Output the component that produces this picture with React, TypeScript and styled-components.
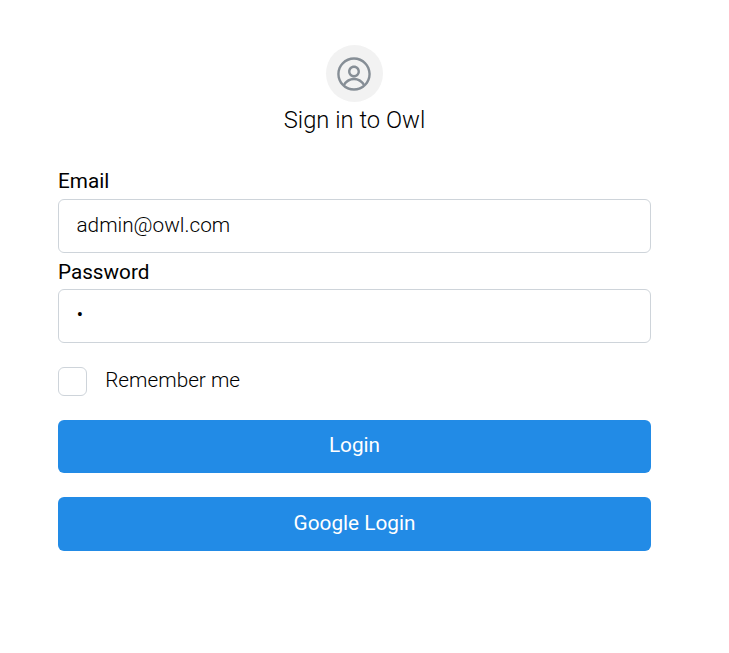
import React from "react";
import styled, { createGlobalStyle } from "styled-components";

const GlobalStyle = createGlobalStyle`
  * { box-sizing: border-box; }
  body { margin: 0; background: #fff; color: #000; font-family: Roboto, sans-serif; }
`;
const Page = styled.main`
  width: 593px;
  margin-left: 58px;
  padding-top: 45px;
  display: flex;
  flex-direction: column;
`;
const Header = styled.header`
  display: flex;
  flex-direction: column;
  align-items: center;
  margin-bottom: 30px;
`;
const Avatar = styled.div`
  width: 57px;
  height: 57px;
  padding: 1px 1px 0 0;
  border-radius: 50%;
  background: #f2f2f2;
  display: flex;
  align-items: center;
  justify-content: center;
`;
const Title = styled.h1`
  margin: 0;
  font-size: 23.75px;
  line-height: 36px;
  font-weight: 300;
`;
const Label = styled.label<{ $gap: number }>`
  font-size: 20.7px;
  font-weight: 400;
  line-height: ${({ $gap }) => 31 - $gap}px;
  margin-bottom: ${({ $gap }) => $gap}px;
`;
const Input = styled.input`
  height: 54px;
  margin: 0 0 5px;
  padding: 0 17.5px 2px;
  border: 1px solid #ced4da;
  border-radius: 6px;
  font: 300 20.75px Roboto, sans-serif;
  color: #000;
  background: #fff;
  outline: none;
  &[type="password"] { padding-bottom: 4px; }
`;
const Remember = styled.label`
  display: flex;
  align-items: center;
  gap: 18.2px;
  margin: 19px 0 24px;
  height: 29px;
  font-size: 20.75px;
  font-weight: 300;
`;
const RememberText = styled.span`
  padding-bottom: 4px;
`;
const Checkbox = styled.input`
  appearance: none;
  width: 29px;
  height: 29px;
  margin: 0;
  border: 1px solid #ced4da;
  border-radius: 6px;
`;
const Button = styled.button<{ $height: number }>`
  height: ${({ $height }) => $height}px;
  margin: 0 0 24px;
  padding: 0 0 2.5px;
  border: 0;
  border-radius: 6px;
  background: #228be6;
  color: #fff;
  font: 400 20.75px Roboto, sans-serif;
`;

export default function App() {
  return (
    <>
      <GlobalStyle />
      <Page>
        <Header>
          <Avatar>
            <svg width="38" height="38" viewBox="0 0 15 15" fill="#868e96" fillRule="evenodd">
              <path d="M0.877014 7.49988C0.877014 3.84219 3.84216 0.877045 7.49985 0.877045C11.1575 0.877045 14.1227 3.84219 14.1227 7.49988C14.1227 11.1575 11.1575 14.1227 7.49985 14.1227C3.84216 14.1227 0.877014 11.1575 0.877014 7.49988ZM7.49985 1.82704C4.36683 1.82704 1.82701 4.36686 1.82701 7.49988C1.82701 8.97196 2.38774 10.3131 3.30727 11.3213C4.19074 9.94119 5.73818 9.02499 7.50023 9.02499C9.26206 9.02499 10.8093 9.94097 11.6929 11.3208C12.6121 10.3127 13.1727 8.97172 13.1727 7.49988C13.1727 4.36686 10.6328 1.82704 7.49985 1.82704ZM10.9818 11.9787C10.2839 10.7795 8.9857 9.97499 7.50023 9.97499C6.01458 9.97499 4.71624 10.7797 4.01845 11.9791C4.97952 12.7272 6.18765 13.1727 7.49985 13.1727C8.81227 13.1727 10.0206 12.727 10.9818 11.9787ZM5.14999 6.50487C5.14999 5.207 6.20212 4.15487 7.49999 4.15487C8.79786 4.15487 9.84999 5.207 9.84999 6.50487C9.84999 7.80274 8.79786 8.85487 7.49999 8.85487C6.20212 8.85487 5.14999 7.80274 5.14999 6.50487ZM7.49999 5.10487C6.72679 5.10487 6.09999 5.73167 6.09999 6.50487C6.09999 7.27807 6.72679 7.90487 7.49999 7.90487C8.27319 7.90487 8.89999 7.27807 8.89999 6.50487C8.89999 5.73167 8.27319 5.10487 7.49999 5.10487Z" />
            </svg>
          </Avatar>
          <Title>Sign in to Owl</Title>
        </Header>
        <Label $gap={4} htmlFor="email">Email</Label>
        <Input id="email" defaultValue="admin@owl.com" />
        <Label $gap={2} htmlFor="password">Password</Label>
        <Input id="password" type="password" defaultValue="a" />
        <Remember>
          <Checkbox type="checkbox" />
          <RememberText>Remember me</RememberText>
        </Remember>
        <Button $height={53}>Login</Button>
        <Button $height={54}>Google Login</Button>
      </Page>
    </>
  );
}
